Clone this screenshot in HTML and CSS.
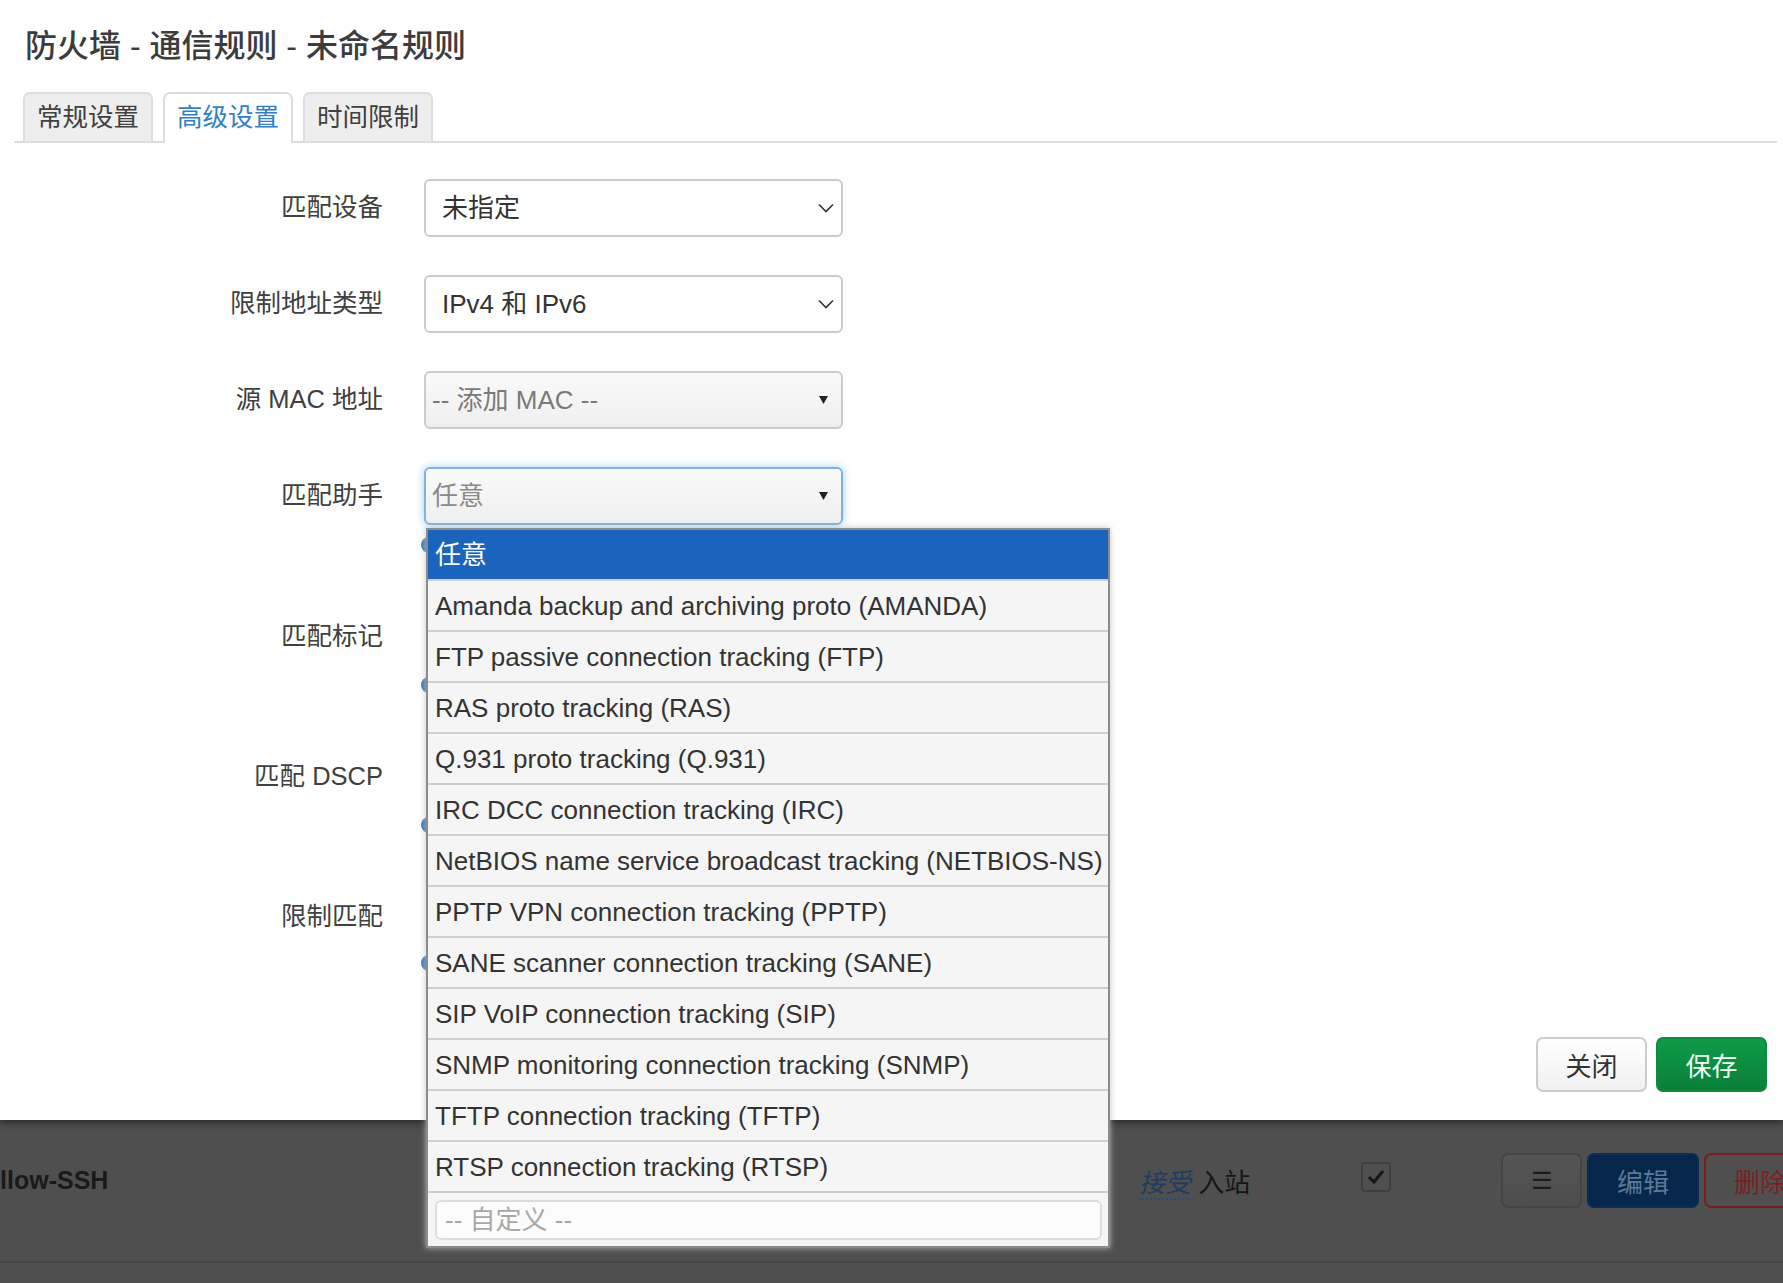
FILE: index.html
```html
<!DOCTYPE html>
<html lang="zh-CN">
<head>
<meta charset="utf-8">
<title>防火墙 - 通信规则 - 未命名规则</title>
<link rel="stylesheet" href="styles.css">
</head>
<body>
<div class="modal">
  <h4 class="title">防火墙 - 通信规则 - 未命名规则</h4>
  <ul class="tabs">
    <li class="tab">常规设置</li>
    <li class="tab active">高级设置</li>
    <li class="tab">时间限制</li>
  </ul>
  <div class="form">
    <div class="row">
      <label class="label">匹配设备</label>
      <div class="field select"><span>未指定</span>
        <svg class="chev" width="16" height="10" viewBox="0 0 16 10"><path d="M1 1.5 L8 8.5 L15 1.5" fill="none" stroke="#333" stroke-width="1.6"/></svg>
      </div>
    </div>
    <div class="row">
      <label class="label">限制地址类型</label>
      <div class="field select"><span>IPv4 和 IPv6</span>
        <svg class="chev" width="16" height="10" viewBox="0 0 16 10"><path d="M1 1.5 L8 8.5 L15 1.5" fill="none" stroke="#333" stroke-width="1.6"/></svg>
      </div>
    </div>
    <div class="row">
      <label class="label">源 MAC 地址</label>
      <div class="field dd"><span class="ph">-- 添加 MAC --</span>
        <svg class="tri" width="9" height="8" viewBox="0 0 9 8"><path d="M0 0 H9 L4.5 8 Z" fill="#222"/></svg>
      </div>
    </div>
    <div class="row">
      <label class="label">匹配助手</label>
      <div class="field dd focus"><span class="ph2">任意</span>
        <svg class="tri" width="9" height="8" viewBox="0 0 9 8"><path d="M0 0 H9 L4.5 8 Z" fill="#222"/></svg>
      </div>
    </div>
    <div class="row tall first">
      <label class="label low">匹配标记</label>
      <div class="field2"><span class="bump"></span></div>
    </div>
    <div class="row tall">
      <label class="label low">匹配 DSCP</label>
      <div class="field2"><span class="bump"></span></div>
    </div>
    <div class="row tall">
      <label class="label low">限制匹配</label>
      <div class="field2"><span class="bump"></span><span class="bump second"></span></div>
    </div>
  </div>
  <div class="actions">
    <button class="btn">关闭</button>
    <button class="btn save">保存</button>
  </div>

  <div class="dropdown">
    <div class="opt sel">任意</div>
    <div class="opt">Amanda backup and archiving proto (AMANDA)</div>
    <div class="opt">FTP passive connection tracking (FTP)</div>
    <div class="opt">RAS proto tracking (RAS)</div>
    <div class="opt">Q.931 proto tracking (Q.931)</div>
    <div class="opt">IRC DCC connection tracking (IRC)</div>
    <div class="opt">NetBIOS name service broadcast tracking (NETBIOS-NS)</div>
    <div class="opt">PPTP VPN connection tracking (PPTP)</div>
    <div class="opt">SANE scanner connection tracking (SANE)</div>
    <div class="opt">SIP VoIP connection tracking (SIP)</div>
    <div class="opt">SNMP monitoring connection tracking (SNMP)</div>
    <div class="opt">TFTP connection tracking (TFTP)</div>
    <div class="opt">RTSP connection tracking (RTSP)</div>
    <div class="custom"><input class="cinput" type="text" placeholder="-- 自定义 --"></div>
  </div>
</div>

<div class="below">
  <div class="trow">
    <div class="c-name">Allow-SSH</div>
    <div class="c-action"><span class="accept">接受</span> 入站</div>
    <div class="c-check">
      <span class="cbox"><svg width="18" height="16" viewBox="0 0 18 16"><path d="M2 8 L7 13 L16 2" fill="none" stroke="#161616" stroke-width="3"/></svg></span>
    </div>
    <div class="c-btns">
      <span class="tbtn menu">☰</span>
      <span class="tbtn edit">编辑</span>
      <span class="tbtn del">删除</span>
    </div>
  </div>
</div>
</body>
</html>
```

FILE: styles.css
```css
* { box-sizing: border-box; }
html, body { margin: 0; padding: 0; }
body {
  width: 1783px;
  height: 1283px;
  overflow: hidden;
  background: #4f4f4f;
  font-family: "Liberation Sans", "Noto Sans CJK SC", sans-serif;
  color: #404040;
}
.modal {
  position: relative;
  height: 1120px;
  background: #fff;
  padding: 0 16px 0 14px;
  display: flex;
  flex-direction: column;
  box-shadow: 0 2px 8px rgba(0,0,0,0.55);
  z-index: 1;
}
.title {
  margin: 0;
  padding: 26px 0 0 11px;
  font-size: 32px;
  line-height: 40px;
  font-weight: 500;
  color: #3c3c3c;
}
.tabs {
  list-style: none;
  margin: 26px -10px 0 0;
  padding: 0 0 0 9px;
  display: flex;
  gap: 10px;
  border-bottom: 2px solid #ddd;
}
.tab {
  height: 49px;
  padding: 0 12px;
  border: 2px solid #ddd;
  border-bottom: none;
  border-radius: 7px 7px 0 0;
  background: #eee;
  font-size: 25.5px;
  line-height: 46px;
  color: #404040;
}
.tab.active {
  background: #fff;
  color: #2f7fd0;
  height: 51px;
  margin-bottom: -2px;
}
.form {
  margin-top: 36px;
  display: flex;
  flex-direction: column;
  gap: 38px;
}
.row {
  display: flex;
  align-items: center;
}
.label {
  flex-shrink: 0;
  width: 369px;
  padding-bottom: 7px;
  text-align: right;
  font-size: 25.5px;
  color: #404040;
  margin-right: 41px;
}
.field {
  width: 419px;
  height: 58px;
  border: 2px solid #ccc;
  border-radius: 6px;
  display: flex;
  align-items: center;
  justify-content: space-between;
  font-size: 26px;
  color: #333;
}
.field span { padding-bottom: 6px; }
.select { padding: 0 7px 0 16px; background: #fff; }
.dd {
  padding: 0 13px 0 6px;
  background: linear-gradient(#fafafa, #efefef);
}
.dd .ph { color: #7a7a7a; }
.dd .ph2 { color: #8a8a8a; }
.dd.focus {
  border-color: #7fb2e3;
  box-shadow: 0 0 8px rgba(82,168,236,0.55);
}
.row.tall {
  align-items: flex-start;
  height: 102px;
}
.row.tall.first { margin-top: -38px; }
.label.low { padding-top: 95px; padding-bottom: 0; line-height: 32px; }
.field2 {
  width: 419px;
  display: flex;
  flex-direction: column;
}
.bump {
  display: block;
  width: 60px;
  height: 16px;
  margin-left: -3px;
  border-radius: 8px;
  background: #3f7ec3;
  margin-top: 12px;
}
.bump.second { margin-top: 122px; }

.actions {
  margin-top: auto;
  padding-bottom: 28px;
  display: flex;
  justify-content: flex-end;
  gap: 9px;
}
.btn {
  width: 111px;
  height: 55px;
  border: 2px solid #ccc;
  border-radius: 7px;
  background: linear-gradient(#ffffff, #f0f0f0);
  font-family: "Liberation Sans", "Noto Sans CJK SC", sans-serif;
  font-size: 26px;
  color: #333;
}
.btn.save {
  border-color: #0e8a3e;
  background: linear-gradient(#0f9a48, #0a8039);
  color: #f4fff7;
}

.dropdown {
  position: absolute;
  left: 426px;
  top: 528px;
  width: 684px;
  background: #f5f5f5;
  border: 2px solid #8c8c8c;
  box-shadow: 0 0 6px rgba(190,190,190,0.9);
  z-index: 5;
}
.opt {
  height: 51px;
  padding: 0 7px;
  border-bottom: 2px solid #cfcfcf;
  font-size: 26px;
  line-height: 51px;
  color: #333;
  white-space: nowrap;
}
.opt.sel {
  background: #1a64be;
  color: #fff;
  border-bottom-color: #c9d3de;
}
.custom {
  padding: 7px 6px 6px 7px;
}
.cinput {
  display: block;
  width: 100%;
  height: 40px;
  border: 2px solid #ddd;
  border-radius: 6px;
  background: #fcfcfc;
  padding: 0 8px;
  font-family: "Liberation Sans", "Noto Sans CJK SC", sans-serif;
  font-size: 26px;
  color: #333;
}
.cinput::placeholder { color: #a8a8a8; }

.below {
  height: 163px;
  background: #4f4f4f;
}
.trow {
  height: 143px;
  padding-bottom: 20px;
  display: flex;
  align-items: center;
  border-bottom: 2px solid #454545;
}
.trow > div { flex-shrink: 0; }
.c-name {
  width: 1157px;
  margin-left: -18px;
  font-weight: bold;
  font-size: 25px;
  color: #1a1a1a;
}
.c-action {
  width: 222px;
  font-size: 26px;
  color: #151515;
}
.accept {
  font-style: italic;
  color: #1f3c60;
  border-bottom: 2px dotted #2a4c7a;
}
.c-check { width: 140px; }
.cbox {
  display: flex;
  align-items: center;
  justify-content: center;
  width: 30px;
  height: 30px;
  border: 2px solid #3e3e3e;
  border-radius: 4px;
  margin-top: -8px;
}
.c-btns {
  display: flex;
  gap: 5px;
}
.tbtn {
  display: flex;
  align-items: center;
  justify-content: center;
  flex-shrink: 0;
  height: 55px;
  border-radius: 7px;
  font-size: 26px;
  border: 2px solid #444;
}
.tbtn.menu {
  width: 81px;
  color: #1b1b1b;
  background: linear-gradient(#555, #4d4d4d);
  font-size: 24px;
}
.tbtn.edit {
  width: 112px;
  background: #06264c;
  border-color: #0a2c55;
  color: #5c7896;
}
.tbtn.del {
  width: 112px;
  border-color: #7a1c1c;
  color: #7e1f1f;
  background: #4f4f4f;
}
```
